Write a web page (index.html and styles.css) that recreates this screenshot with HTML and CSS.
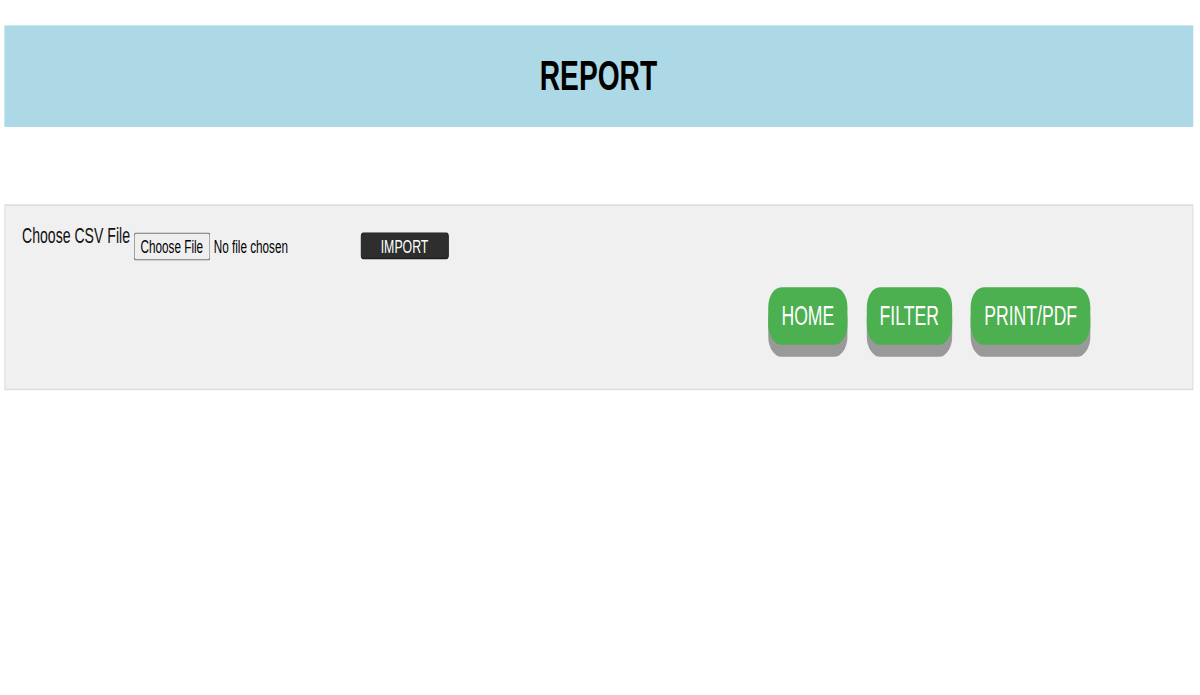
FILE: index.html
```html
<!DOCTYPE html>
<html lang="en">
<head>
<meta charset="utf-8">
<title>Report</title>
<link rel="stylesheet" href="styles.css">
</head>
<body>
<div class="viewport">
  <div class="page">
    <header class="banner">
      <h1 class="banner-title">REPORT</h1>
    </header>
    <section class="panel">
      <form class="import-row">
        <label class="file-label" for="csv">Choose CSV File</label>
        <input class="file-input" id="csv" type="file" accept=".csv">
        <button class="import-btn" type="button">IMPORT</button>
      </form>
      <nav class="action-row">
        <button class="action-btn" type="button">HOME</button>
        <button class="action-btn" type="button">FILTER</button>
        <button class="action-btn" type="button">PRINT/PDF</button>
      </nav>
    </section>
  </div>
</div>
</body>
</html>
```

FILE: styles.css
```css
html, body {
  margin: 0;
  padding: 0;
  background: #ffffff;
  overflow: hidden;
}

body {
  font-family: "Liberation Sans", Arial, sans-serif;
  color: #000;
}

.viewport {
  width: 1200px;
  height: 695px;
  overflow: hidden;
}

.page {
  width: 1363.6px;
  height: 520px;
  padding-top: 18.7px;
  box-sizing: border-box;
  transform: scale(0.88, 1.336);
  transform-origin: 0 0;
}

.banner {
  margin: 0 8px 0 4.5px;
  padding: 19.5px 0 20px;
  background: #add8e6;
  text-align: center;
}

.banner-title {
  margin: 0;
  font-size: 32px;
  font-weight: bold;
  line-height: normal;
}

.panel {
  margin: 58px 8px 0 4.5px;
  padding: 13px 19.5px 33.5px;
  background: #f0f0f0;
  border: 1px solid #dcdcdc;
}

.import-row {
  display: flex;
  align-items: flex-start;
  margin: 0;
}

.file-label {
  font-size: 16px;
  line-height: normal;
  color: #111;
  margin-top: 0.5px;
}

.file-input {
  margin: 6.5px 0 0 4px;
  width: 200px;
  height: 21px;
  font-family: "Liberation Sans", Arial, sans-serif;
  font-size: 13.33px;
}

.import-btn {
  margin: 7.2px 0 0 58px;
  width: 100px;
  height: 20px;
  padding: 0;
  background: #2e2e2e;
  border: 1px solid #1e1e1e;
  border-radius: 3px;
  color: #fff;
  font-family: "Liberation Sans", Arial, sans-serif;
  font-size: 14px;
}

.action-row {
  display: flex;
  gap: 21.5px;
  margin-top: 20.2px;
  padding-left: 848px;
}

.action-btn {
  padding: 10px 15px;
  font-family: "Liberation Sans", Arial, sans-serif;
  font-size: 20px;
  line-height: normal;
  color: #fff;
  background: #4caf50;
  border: none;
  border-radius: 15px;
  box-shadow: 0 9px #999;
}
```
